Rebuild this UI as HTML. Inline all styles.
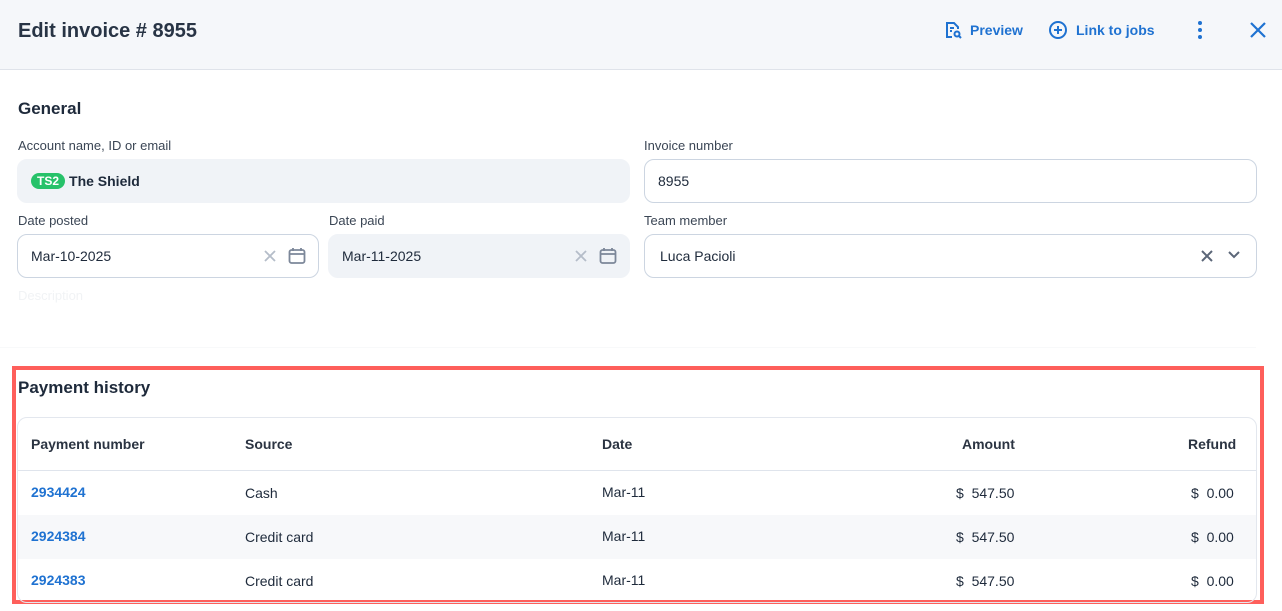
<!DOCTYPE html>
<html><head><style>
*{box-sizing:border-box;margin:0;padding:0}
body{width:1282px;height:611px;overflow:hidden;background:#fff;font-family:"Liberation Sans",sans-serif;color:#1e2a3b;position:relative}
.a{position:absolute;white-space:nowrap}
.hdr{left:0;top:0;width:1282px;height:70px;background:#f5f7fa;border-bottom:1px solid #dfe3ea}
.lbl{font-size:13px;color:#3b4655}
.inp{border:1px solid #ccd5e1;border-radius:10px;height:44px;font-size:14px;padding:0 0 0 13px;line-height:42px}
.dis{background:#f0f3f7;border-color:#f0f3f7}
.blue{color:#1f72d1}
.th{font-size:14px;font-weight:bold;color:#2b3442}
.td{font-size:14px;color:#1e2a3b}
</style></head><body>
<div class="a hdr"></div>
<div class="a" style="left:18px;top:20px;font-size:20px;font-weight:bold;color:#283445">Edit invoice # 8955</div>
<svg class="a" style="left:944px;top:21px" width="18" height="18" viewBox="0 0 18 18" fill="none" stroke="#1f72d1" stroke-width="2"><path d="M8 16H3V2h7l4 4v2"/><path d="M6 7h4M6 10h2"/><circle cx="13" cy="13" r="2.5"/><path d="M15 15l2 2"/></svg>
<div class="a blue" style="left:970px;top:22px;font-size:14px;font-weight:bold">Preview</div>
<svg class="a" style="left:1048px;top:20px" width="20" height="20" viewBox="0 0 20 20" fill="none" stroke="#1f72d1" stroke-width="2"><circle cx="10" cy="10" r="8"/><path d="M10 6v8M6 10h8"/></svg>
<div class="a blue" style="left:1076px;top:22px;font-size:14px;font-weight:bold">Link to jobs</div>
<svg class="a" style="left:1195px;top:20px" width="10" height="20"><circle cx="5" cy="3" r="2" fill="#1f72d1"/><circle cx="5" cy="10" r="2" fill="#1f72d1"/><circle cx="5" cy="17" r="2" fill="#1f72d1"/></svg>
<svg class="a" style="left:1249px;top:21px" width="18" height="18" stroke="#1f72d1" stroke-width="2.2"><path d="M2 2l14 14M16 2L2 16"/></svg>

<div class="a" style="left:18px;top:99px;font-size:17px;font-weight:bold">General</div>
<div class="a lbl" style="left:18px;top:138px">Account name, ID or email</div>
<div class="a inp dis" style="left:17px;top:159px;width:613px"><span style="display:inline-block;background:#27c26a;color:#fff;font-size:12px;font-weight:bold;border-radius:9px;padding:0 6px;line-height:16px;margin:0 4px 0 0;vertical-align:1px">TS2</span><b style="font-size:14px">The Shield</b></div>
<div class="a lbl" style="left:644px;top:138px">Invoice number</div>
<div class="a inp" style="left:644px;top:159px;width:613px">8955</div>

<div class="a lbl" style="left:18px;top:213px">Date posted</div>
<div class="a inp" style="left:17px;top:234px;width:302px">Mar-10-2025</div>
<div class="a lbl" style="left:329px;top:213px">Date paid</div>
<div class="a inp dis" style="left:328px;top:234px;width:302px">Mar-11-2025</div>
<svg class="a" style="left:264px;top:250px" width="12" height="12" stroke="#b5bdc9" stroke-width="1.8"><path d="M1 1l10 10M11 1L1 11"/></svg>
<svg class="a" style="left:288px;top:247px" width="18" height="18" fill="none" stroke="#7c8799" stroke-width="1.8"><rect x="1.5" y="3" width="15" height="13" rx="2"/><path d="M1.5 7h15M5 1v3M13 1v3"/></svg>
<svg class="a" style="left:575px;top:250px" width="12" height="12" stroke="#b5bdc9" stroke-width="1.8"><path d="M1 1l10 10M11 1L1 11"/></svg>
<svg class="a" style="left:599px;top:247px" width="18" height="18" fill="none" stroke="#7c8799" stroke-width="1.8"><rect x="1.5" y="3" width="15" height="13" rx="2"/><path d="M1.5 7h15M5 1v3M13 1v3"/></svg>
<div class="a lbl" style="left:644px;top:213px">Team member</div>
<div class="a inp" style="left:644px;top:234px;width:613px;padding-left:15px">Luca Pacioli</div>
<svg class="a" style="left:1201px;top:250px" width="12" height="12" stroke="#5b6678" stroke-width="2"><path d="M1 1l10 10M11 1L1 11"/></svg>
<svg class="a" style="left:1228px;top:251px" width="12" height="8" fill="none" stroke="#5b6678" stroke-width="2"><path d="M1 1l5 5 5-5"/></svg>
<div class="a" style="left:18px;top:288px;font-size:13px;color:#f1f3f5">Description</div>
<div class="a" style="left:0;top:347px;width:1256px;height:1px;background:#f8f9fa"></div>

<div class="a" style="left:12px;top:366px;width:1252px;height:238px;border:4px solid #fe5f5b"></div>
<div class="a" style="left:18px;top:378px;font-size:17px;font-weight:bold">Payment history</div>
<div class="a" style="left:17px;top:417px;width:1240px;height:186px;border:1px solid #e3e7ee;border-radius:10px;overflow:hidden">
 <div style="position:absolute;left:0;top:52px;width:100%;height:1px;background:#dfe4ec"></div>
 <div style="position:absolute;left:0;top:97px;width:100%;height:44px;background:#f7f8fa"></div>
</div>
<div class="a th" style="left:31px;top:436px">Payment number</div>
<div class="a th" style="left:245px;top:436px">Source</div>
<div class="a th" style="left:602px;top:436px">Date</div>
<div class="a th" style="left:962px;top:436px">Amount</div>
<div class="a th" style="left:1188px;top:436px">Refund</div>

<div class="a td blue" style="left:31px;top:484px;font-weight:bold;color:#1f72d1">2934424</div>
<div class="a td" style="left:245px;top:485px">Cash</div>
<div class="a td" style="left:602px;top:484px">Mar-11</div>
<div class="a td" style="left:956px;top:485px">$&nbsp;&nbsp;547.50</div>
<div class="a td" style="left:1191px;top:485px">$&nbsp;&nbsp;0.00</div>

<div class="a td blue" style="left:31px;top:528px;font-weight:bold;color:#1f72d1">2924384</div>
<div class="a td" style="left:245px;top:529px">Credit card</div>
<div class="a td" style="left:602px;top:528px">Mar-11</div>
<div class="a td" style="left:956px;top:529px">$&nbsp;&nbsp;547.50</div>
<div class="a td" style="left:1191px;top:529px">$&nbsp;&nbsp;0.00</div>

<div class="a td blue" style="left:31px;top:572px;font-weight:bold;color:#1f72d1">2924383</div>
<div class="a td" style="left:245px;top:573px">Credit card</div>
<div class="a td" style="left:602px;top:572px">Mar-11</div>
<div class="a td" style="left:956px;top:573px">$&nbsp;&nbsp;547.50</div>
<div class="a td" style="left:1191px;top:573px">$&nbsp;&nbsp;0.00</div>
</body></html>
